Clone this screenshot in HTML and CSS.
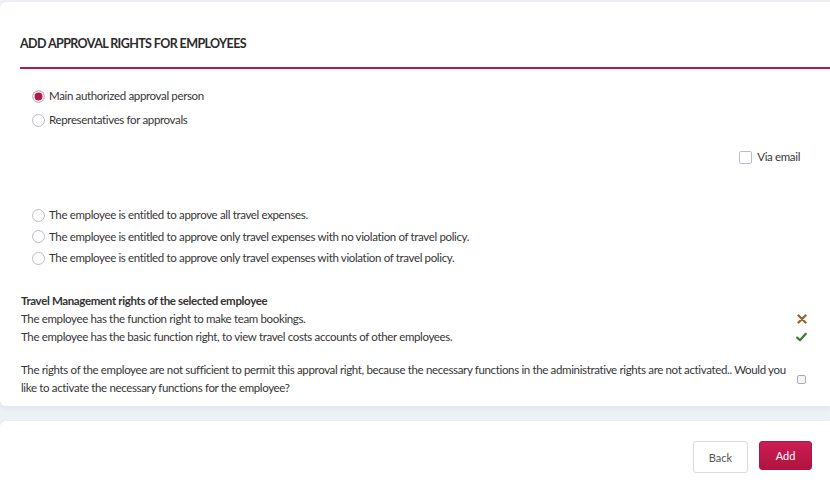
FILE: index.html
```html
<!DOCTYPE html>
<html>
<head>
<meta charset="utf-8">
<link rel="stylesheet" href="styles.css">
</head>
<body>
<div class="page">
  <section class="card main">
    <h1 class="title">ADD APPROVAL RIGHTS FOR EMPLOYEES</h1>
    <div class="rule"></div>

    <div class="group first">
      <label class="opt"><span class="radio checked"></span>Main authorized approval person</label>
      <label class="opt"><span class="radio"></span>Representatives for approvals</label>
    </div>

    <div class="email-row">
      <label class="opt"><span class="check"></span>Via email</label>
    </div>

    <div class="group second">
      <label class="opt"><span class="radio"></span>The employee is entitled to approve all travel expenses.</label>
      <label class="opt"><span class="radio"></span>The employee is entitled to approve only travel expenses with no violation of travel policy.</label>
      <label class="opt"><span class="radio"></span>The employee is entitled to approve only travel expenses with violation of travel policy.</label>
    </div>

    <div class="rights">
      <div class="rights-head">Travel Management rights of the selected employee</div>
      <div class="rights-row">
        <span>The employee has the function right to make team bookings.</span>
        <svg class="icon" width="10" height="10" viewBox="0 0 10 10"><path d="M1.5 1.5 L8.5 8.5 M8.5 1.5 L1.5 8.5" stroke="#8f6a2c" stroke-width="2.4" stroke-linecap="round"/></svg>
      </div>
      <div class="rights-row">
        <span>The employee has the basic function right, to view travel costs accounts of other employees.</span>
        <svg class="icon" width="11" height="10" viewBox="0 0 11 10"><path d="M1.2 5.6 L4 8.2 L9.8 1.8" stroke="#3d7a33" stroke-width="2.2" fill="none" stroke-linecap="round" stroke-linejoin="round"/></svg>
      </div>
    </div>

    <div class="notice">
      <p>The rights of the employee are not sufficient to permit this approval right, because the necessary functions in the administrative rights are not activated.. Would you like to activate the necessary functions for the employee?</p>
      <span class="small-check"></span>
    </div>
  </section>

  <section class="card footer">
    <button class="btn back">Back</button>
    <button class="btn add">Add</button>
  </section>
</div>
</body>
</html>
```

FILE: styles.css
```css
* { box-sizing: border-box; }
html, body { margin: 0; padding: 0; }
body {
  background: #eef1f6;
  font-family: Lato, "Open Sans", sans-serif;
  color: #363636;
  font-size: 11.5px;
  letter-spacing: -0.35px;
  width: 830px;
  height: 485px;
  overflow: hidden;
}
.page {
  padding-top: 2px;
  display: flex;
  flex-direction: column;
  gap: 15px;
}
.card {
  background: #fff;
  border-radius: 6px 0 0 6px;
  box-shadow: 0 2px 6px rgba(40, 60, 100, 0.08);
}
.main {
  height: 404px;
  padding: 0 0 0 20px;
}
.title {
  margin: 0;
  padding-top: 34px;
  font-size: 12.5px;
  font-weight: 700;
  color: #2b2b2b;
  line-height: 16px;
  letter-spacing: -0.6px;
}
.rule {
  margin-top: 15px;
  height: 2px;
  background: #b31a4b;
}
.group {
  display: flex;
  flex-direction: column;
  padding-left: 12px;
}
.group.first { margin-top: 19px; gap: 8px; }
.group.second { margin-top: 42px; gap: 5.5px; }
.opt {
  display: flex;
  align-items: center;
  height: 16px;
  line-height: 16px;
}
.radio {
  width: 13px;
  height: 13px;
  border: 1px solid #b9bec6;
  border-radius: 50%;
  margin-right: 4px;
  background: #fff;
  flex: none;
}
.radio.checked {
  background: #b31a4b;
  box-shadow: inset 0 0 0 1.5px #fff;
  border-color: #c9ccd2;
}
.email-row {
  display: flex;
  justify-content: flex-end;
  padding-right: 30px;
  margin-top: 21px;
}
.check {
  width: 13px;
  height: 13px;
  border: 1px solid #b9bec6;
  border-radius: 2px;
  margin-right: 5px;
  flex: none;
}
.rights {
  margin-top: 26px;
  padding-left: 1px;
  padding-right: 20px;
}
.rights-head {
  font-weight: 700;
  line-height: 18px;
  color: #333;
}
.rights-row {
  display: flex;
  justify-content: space-between;
  align-items: center;
  line-height: 18px;
}
.rights-row .icon { margin-right: 3px; }
.notice {
  margin-top: 15px;
  padding-left: 1px;
  display: flex;
  align-items: center;
  gap: 5px;
  padding-right: 24px;
}
.notice p {
  margin: 0;
  line-height: 18px;
  flex: 1;
}
.small-check {
  width: 9px;
  height: 9px;
  border: 1px solid #a9adb3;
  border-radius: 2px;
  background: #f4f5f7;
  flex: none;
}
.footer {
  height: 80px;
  display: flex;
  justify-content: flex-end;
  align-items: flex-start;
  gap: 11px;
  padding: 20px 18px 0 0;
}
.btn {
  font-family: Lato, "Open Sans", sans-serif;
  font-size: 11px;
  border-radius: 3px;
  cursor: pointer;
}
.back {
  width: 55px;
  height: 32px;
  background: #fff;
  border: 1px solid #d6dce4;
  color: #555;
}
.add {
  width: 53px;
  height: 29px;
  background: linear-gradient(#cc1d55, #b0143f);
  border: 1px solid #b0143f;
  color: #fff;
}
```
